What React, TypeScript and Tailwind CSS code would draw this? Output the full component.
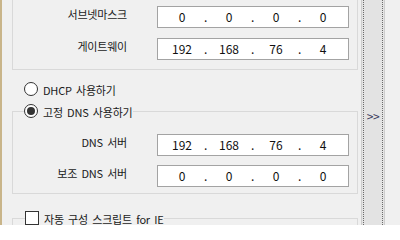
const ko = "font-['Noto_Sans_CJK_KR','Noto_Sans',sans-serif]";
const text = 'text-[11px] leading-[16px] tracking-[-0.2px] [word-spacing:2px] text-[#1a1a1a]';

function IpField({ octets }: { octets: string[] }) {
  return (
    <div className="ml-[30px] flex h-[22px] w-[192px] items-center border border-[#a3a3a3] bg-white pl-[2px] text-[12px] leading-none text-[#101010]">
      {octets.map((o, i) => (
        <div key={i} className="flex items-center">
          {i > 0 && <span className="w-[3px] text-center">.</span>}
          <span className="w-[44px] text-center">{o}</span>
        </div>
      ))}
    </div>
  );
}

function Row({ label, octets }: { label: string; octets: string[] }) {
  return (
    <div className="flex items-start">
      <span className={`w-[114px] text-right ${text}`}>{label}</span>
      <IpField octets={octets} />
    </div>
  );
}

function Radio({ checked }: { checked?: boolean }) {
  return (
    <span className="flex h-[14px] w-[14px] shrink-0 items-center justify-center rounded-full border border-[#333333] bg-white">
      {checked && <span className="h-[8px] w-[8px] rounded-full bg-[#333333]" />}
    </span>
  );
}

export default function App() {
  return (
    <div className={`flex h-[225px] w-[400px] overflow-hidden bg-[#f0f0f0] ${ko}`}>
      {/* main settings column */}
      <div className="w-[361px] shrink-0 border-l-2 border-[#c9b58a] pl-[10px] pr-[3px]">
        <div className="flex flex-col gap-[10px] border-x border-b border-[#d9d9d9] pt-[6px] pb-[9px]">
          <Row label="서브넷마스크" octets={['0', '0', '0', '0']} />
          <Row label="게이트웨이" octets={['192', '168', '76', '4']} />
        </div>

        <div className="mt-[12px] flex h-[14px] items-start gap-[5px] pl-[12px]">
          <Radio />
          <span className={text}>DHCP 사용하기</span>
        </div>

        <fieldset className="mt-[8px] border border-[#d9d9d9] pb-[6px]">
          <legend className="ml-[11px] flex h-[14px] items-start gap-[5px]">
            <Radio checked />
            <span className={text}>고정 DNS 사용하기</span>
          </legend>
          <div className="flex flex-col gap-[9px] pt-[16px]">
            <Row label="DNS 서버" octets={['192', '168', '76', '4']} />
            <Row label="보조 DNS 서버" octets={['0', '0', '0', '0']} />
          </div>
        </fieldset>

        <fieldset className="mt-[17px] h-[40px] border border-[#d9d9d9]">
          <legend className="ml-[12px] flex h-[14px] items-start gap-[5px]">
            <span className="h-[14px] w-[14px] shrink-0 border border-[#333333] bg-white" />
            <span className={text}>자동 구성 스크립트 for IE</span>
          </legend>
        </fieldset>
      </div>

      {/* collapse strip */}
      <div className="w-[24px] shrink-0 border-x border-[#cdcdcd] bg-[#e3e3e3] px-[1px]">
        <div className="flex h-full items-center justify-center border-x border-dotted border-[#6a6a6a] pt-[6px]">
          <span className="text-[12px] leading-none tracking-[-0.5px] text-[#3a3a5c]">&gt;&gt;</span>
        </div>
      </div>

      <div className="flex-1 bg-[#f0f0f0]" />
    </div>
  );
}
